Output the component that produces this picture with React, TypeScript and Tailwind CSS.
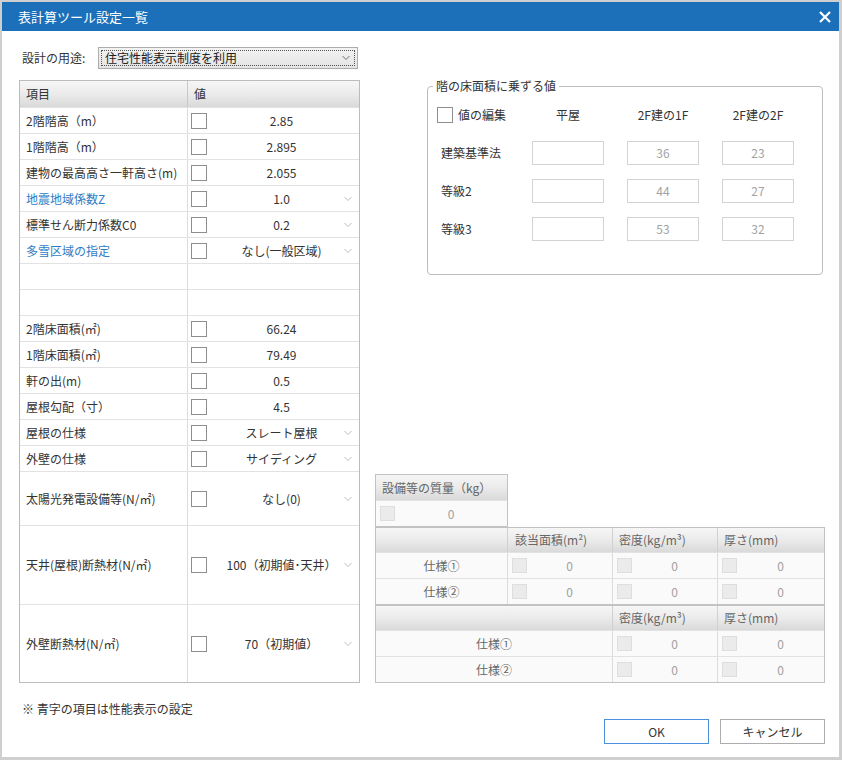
import React from 'react';

const Chevron = ({ c = '#bdbdbd' }: { c?: string }) => (
  <svg width="8" height="5" viewBox="0 0 8 5">
    <polyline points="0.5,0.5 4,4 7.5,0.5" fill="none" stroke={c} strokeWidth="1" />
  </svg>
);

type RowData = { label?: string; value?: string; blue?: boolean; select?: boolean; h?: string; empty?: boolean };

const rows: RowData[] = [
  { label: '2階階高（m）', value: '2.85' },
  { label: '1階階高（m）', value: '2.895' },
  { label: '建物の最高高さ一軒高さ(m)', value: '2.055' },
  { label: '地震地域係数Z', value: '1.0', blue: true, select: true },
  { label: '標準せん断力係数C0', value: '0.2', select: true },
  { label: '多雪区域の指定', value: 'なし(一般区域)', blue: true, select: true },
  { empty: true },
  { empty: true },
  { label: '2階床面積(㎡)', value: '66.24' },
  { label: '1階床面積(㎡)', value: '79.49' },
  { label: '軒の出(m)', value: '0.5' },
  { label: '屋根勾配（寸）', value: '4.5' },
  { label: '屋根の仕様', value: 'スレート屋根', select: true },
  { label: '外壁の仕様', value: 'サイディング', select: true },
  { label: '太陽光発電設備等(N/㎡)', value: 'なし(0)', select: true, h: 'h-[54px]' },
  { label: '天井(屋根)断熱材(N/㎡)', value: '100（初期値･天井）', select: true, h: 'h-[79px]' },
  { label: '外壁断熱材(N/㎡)', value: '70（初期値）', select: true, h: 'h-[78px]' },
];

function Row({ r }: { r: RowData }) {
  return (
    <div className={`flex border-t border-[#e2e2e2] ${r.h ?? 'h-[26px]'}`}>
      <div
        className={`w-[168px] shrink-0 border-r border-[#dcdcdc] pl-[6px] flex items-center whitespace-nowrap ${
          r.blue ? 'text-[#2f7cc4]' : 'text-[#333333]'
        }`}
      >
        {r.label}
      </div>
      <div className="relative flex-1 flex items-center">
        {!r.empty && (
          <>
            <span className="ml-[3px] w-[16px] h-[16px] border border-[#8e8e8e] bg-white shrink-0" />
            <span className="flex-1 text-center pr-[3px] text-[#333333] whitespace-nowrap">{r.value}</span>
            {r.select && (
              <span className="absolute right-[7px] top-1/2 -translate-y-1/2 flex">
                <Chevron />
              </span>
            )}
          </>
        )}
      </div>
    </div>
  );
}

const DisCb = () => <span className="w-[15px] h-[15px] bg-[#ebebeb] border border-[#dedede] shrink-0" />;

function ValCell({ w, last }: { w?: string; last?: boolean }) {
  return (
    <div className={`${w ?? 'flex-1'} flex items-center pl-[4px] ${last ? '' : 'border-r border-[#dcdcdc]'}`}>
      <DisCb />
      <span className="flex-1 text-center text-[#a0a0a0]">0</span>
    </div>
  );
}

const hdr = 'bg-linear-to-b from-[#f6f6f6] via-[#ebebeb] to-[#d9d9d9]';

export default function App() {
  return (
    <div className="w-[842px] h-[760px] bg-[#cfcfcf] pt-[2px] pl-[2px] pr-[3px] pb-[3px] font-['Noto_Sans_CJK_JP','Noto_Sans',sans-serif] text-[12px] leading-[16px]">
      <div className="w-full h-full bg-white flex flex-col">
        {/* title bar */}
        <div className="h-[29px] bg-[#1c6fb9] flex items-center justify-between pl-[16px] pr-[8px] shrink-0">
          <span className="text-white text-[13px]">表計算ツール設定一覧</span>
          <svg width="12" height="12" viewBox="0 0 12 12">
            <line x1="1" y1="1" x2="11" y2="11" stroke="white" strokeWidth="2.2" />
            <line x1="11" y1="1" x2="1" y2="11" stroke="white" strokeWidth="2.2" />
          </svg>
        </div>

        <div className="flex-1 flex flex-col pl-[17px] pr-[14px]">
          {/* main row */}
          <div className="flex gap-[15px]">
            {/* left column */}
            <div className="w-[341px] shrink-0 flex flex-col">
              <div className="mt-[16px] h-[22px] flex items-center">
                <span className="w-[79px] pl-[3px] text-[#333333]">設計の用途:</span>
                <div className="relative w-[260px] h-[22px] border border-[#acacac] bg-linear-to-b from-[#f3f3f3] to-[#e4e4e4] flex items-center pl-[6px]">
                  <span className="absolute inset-[2px] border border-dotted border-[#555555]" />
                  <span className="text-[#222222]">住宅性能表示制度を利用</span>
                  <span className="absolute right-[7px] top-1/2 -translate-y-1/2 flex">
                    <Chevron c="#707070" />
                  </span>
                </div>
              </div>

              <div className="mt-[11px] border border-[#bcbcbc] flex flex-col">
                <div className={`h-[26px] flex ${hdr}`}>
                  <div className="w-[168px] border-r border-[#c8c8c8] pl-[6px] flex items-center text-[#333333]">項目</div>
                  <div className="flex-1 pl-[6px] flex items-center text-[#333333]">値</div>
                </div>
                {rows.map((r, i) => (
                  <Row key={i} r={r} />
                ))}
              </div>
            </div>

            {/* right column */}
            <div className="w-[450px] flex flex-col">
              <div className="mt-[55px] ml-[52px] w-[396px] h-[189px] relative border border-[#bdbdbd] rounded-[4px] pt-[20px] pl-[13px]">
                <span className="absolute left-[5px] -top-[9px] bg-white px-[3px] text-[#333333]">階の床面積に乗ずる値</span>
                <div className="grid grid-cols-[68px_72px_72px_72px] gap-x-[23px] items-center text-[#333333]">
                  <div className="flex items-center -ml-[4px] whitespace-nowrap h-[16px]">
                    <span className="w-[16px] h-[16px] border border-[#8e8e8e] bg-white shrink-0" />
                    <span className="ml-[5px]">値の編集</span>
                  </div>
                  <div className="text-center">平屋</div>
                  <div className="text-center whitespace-nowrap">2F建の1F</div>
                  <div className="text-center whitespace-nowrap">2F建の2F</div>
                </div>
                <div className="mt-[18px] grid grid-cols-[68px_72px_72px_72px] gap-x-[23px] gap-y-[14px] items-center">
                  {[
                    ['建築基準法', '36', '23'],
                    ['等級2', '44', '27'],
                    ['等級3', '53', '32'],
                  ].map(([l, a, b]) => (
                    <React.Fragment key={l}>
                      <div className="text-[#333333]">{l}</div>
                      <div className="h-[24px] border border-[#d3d3d3]" />
                      <div className="h-[24px] border border-[#d3d3d3] flex items-center justify-center text-[#a3a3a3]">{a}</div>
                      <div className="h-[24px] border border-[#d3d3d3] flex items-center justify-center text-[#a3a3a3]">{b}</div>
                    </React.Fragment>
                  ))}
                </div>
              </div>

              <div className="mt-auto flex flex-col">
                {/* table 1 */}
                <div className="w-[133px] border border-[#c2c2c2]">
                  <div className={`h-[25px] flex items-center pl-[6px] text-[#666666] ${hdr}`}>設備等の質量（kg）</div>
                  <div className="h-[26px] border-t border-[#e2e2e2] bg-[#fafafa] flex items-center pl-[4px]">
                    <DisCb />
                    <span className="flex-1 text-center text-[#a0a0a0]">0</span>
                  </div>
                </div>
                {/* table 2 */}
                <div className="border border-[#c2c2c2] text-[#666666]">
                  <div className={`h-[24px] flex ${hdr}`}>
                    <div className="w-[132px] border-r border-[#d0d0d0]" />
                    <div className="w-[105px] border-r border-[#d0d0d0] flex items-center pl-[7px]">該当面積(m²)</div>
                    <div className="w-[105px] border-r border-[#d0d0d0] flex items-center pl-[6px]">密度(kg/m³)</div>
                    <div className="flex-1 flex items-center pl-[6px]">厚さ(mm)</div>
                  </div>
                  {['仕様①', '仕様②'].map((s) => (
                    <div key={s} className="h-[26px] flex border-t border-[#e2e2e2] bg-[#fafafa]">
                      <div className="w-[132px] border-r border-[#dcdcdc] flex items-center justify-center">{s}</div>
                      <ValCell w="w-[105px]" />
                      <ValCell w="w-[105px]" />
                      <ValCell last />
                    </div>
                  ))}
                </div>
                {/* table 3 */}
                <div className="border border-[#c2c2c2] text-[#666666]">
                  <div className={`h-[24px] flex ${hdr}`}>
                    <div className="w-[237px] border-r border-[#d0d0d0]" />
                    <div className="w-[105px] border-r border-[#d0d0d0] flex items-center pl-[6px]">密度(kg/m³)</div>
                    <div className="flex-1 flex items-center pl-[6px]">厚さ(mm)</div>
                  </div>
                  {['仕様①', '仕様②'].map((s) => (
                    <div key={s} className="h-[26px] flex border-t border-[#e2e2e2] bg-[#fafafa]">
                      <div className="w-[237px] border-r border-[#dcdcdc] flex items-center justify-center">{s}</div>
                      <ValCell w="w-[105px]" />
                      <ValCell last />
                    </div>
                  ))}
                </div>
              </div>
            </div>
          </div>

          {/* bottom row */}
          <div className="flex justify-between items-start">
            <div className="mt-[18px] pl-[3px] text-[#333333]">※ 青字の項目は性能表示の設定</div>
            <div className="mt-[36px] flex gap-[11px]">
              <button className="w-[105px] h-[25px] border border-[#4a90dc] bg-white text-[#333333]">OK</button>
              <button className="w-[105px] h-[25px] border border-[#adadad] bg-white text-[#333333]">キャンセル</button>
            </div>
          </div>
        </div>
      </div>
    </div>
  );
}
